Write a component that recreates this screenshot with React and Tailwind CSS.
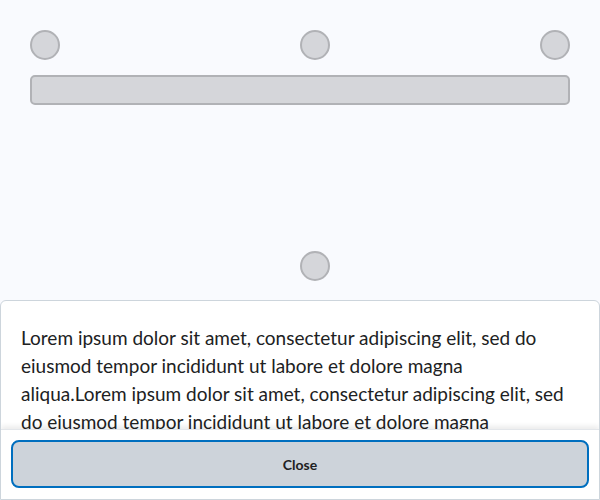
import React from 'react';

const Dot = ({ className = '' }) => (
  <div className={`w-[30px] h-[30px] rounded-full bg-[#d5d6da] border-2 border-[#b1b2b6] ${className}`} />
);

const App = () => {
  return (
    <div className="w-[600px] h-[500px] bg-[#f9fafe] flex flex-col overflow-hidden" style={{ fontFamily: 'Lato, "Noto Sans", sans-serif' }}>
      {/* page behind the dialog */}
      <div className="h-[300px] px-[30px] pt-[30px] flex flex-col">
        <div className="flex items-center">
          <Dot />
          <Dot className="ml-[240px]" />
          <Dot className="ml-auto" />
        </div>
        <div className="mt-[15px] h-[30px] rounded-[5px] bg-[#d5d6da] border-2 border-[#b1b2b6]" />
        <div className="mt-[146px] ml-[270px]">
          <Dot />
        </div>
      </div>

      {/* dialog */}
      <div className="h-[200px] bg-white border border-[#cdd5dc] rounded-t-[6px] flex flex-col overflow-hidden">
        <div className="flex-1 overflow-hidden pl-[20px] pt-[23px]">
          <p className="w-[556px] text-[19px] leading-[28px] text-[#202122]">
            Lorem ipsum dolor sit amet, consectetur adipiscing elit, sed do eiusmod tempor incididunt ut labore et dolore magna
            <br />
            aliqua.Lorem ipsum dolor sit amet, consectetur adipiscing elit, sed do eiusmod tempor incididunt ut labore et dolore magna
            <br />
            aliqua.
          </p>
        </div>
        <div className="h-[70px] shrink-0 bg-white border-t border-[#e3e6ea] shadow-[0_-3px_5px_rgba(0,0,0,0.08)] px-[10px] pt-[10px] relative">
          <button className="w-full h-[48px] rounded-[8px] bg-[#cdd3da] border-2 border-[#006fbf] text-[14px] font-bold text-[#202122]">
            Close
          </button>
        </div>
      </div>
    </div>
  );
};

export default App;
